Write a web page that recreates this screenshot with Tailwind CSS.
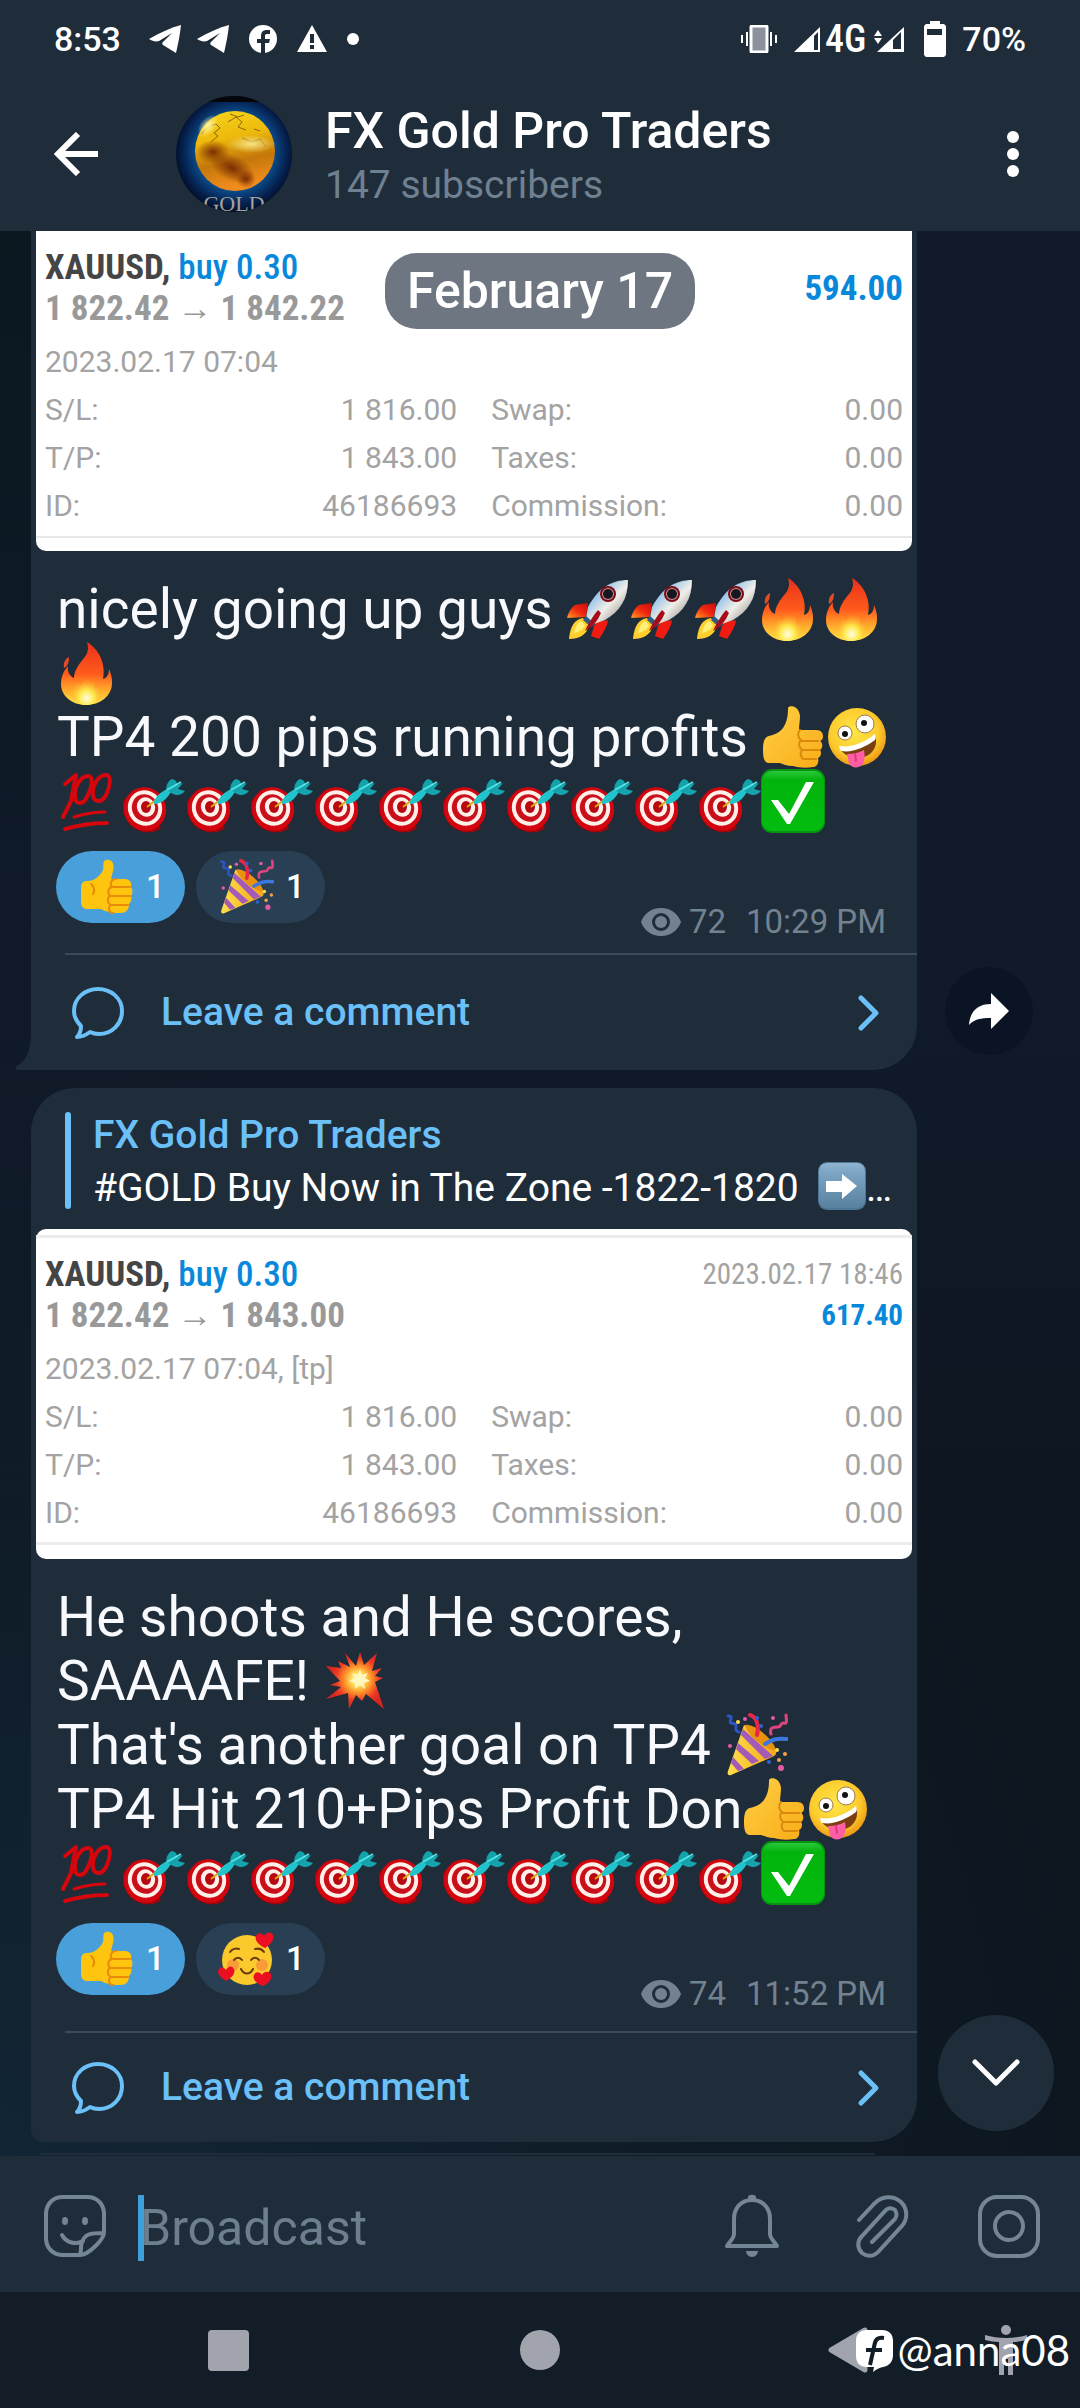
<!DOCTYPE html>
<html lang="en">
<head>
    <meta charset="UTF-8">
    <meta name="viewport" content="width=device-width, initial-scale=1.0">
    <title>FX Gold Pro Traders</title>
    <script src="https://cdn.jsdelivr.net/npm/@tailwindcss/browser@4"></script>
</head>
<body class="min-h-screen flex flex-col bg-[#0f1a26] text-white font-['Roboto',sans-serif]">

    <!-- Emoji and icon sprites -->
    <svg class="absolute size-0" aria-hidden="true">
        <defs>
            <linearGradient id="g-fire" x1="0" y1="0" x2="0" y2="1">
                <stop offset="0" stop-color="#e8301a"/><stop offset=".5" stop-color="#ff5a1c"/><stop offset=".8" stop-color="#ffb52e"/><stop offset="1" stop-color="#ffe14a"/>
            </linearGradient>
            <radialGradient id="g-fire-in" cx=".5" cy=".8" r=".6">
                <stop offset="0" stop-color="#fffde0"/><stop offset=".4" stop-color="#ffe94c"/><stop offset="1" stop-color="#ff9a22" stop-opacity="0"/>
            </radialGradient>
            <linearGradient id="g-rocket" x1="0" y1="0" x2="1" y2="1">
                <stop offset="0" stop-color="#3f8fd8"/><stop offset=".3" stop-color="#9cc6e6"/><stop offset=".55" stop-color="#f1efe9"/><stop offset="1" stop-color="#77716c"/>
            </linearGradient>
            <linearGradient id="g-fin" x1="0" y1="1" x2="1" y2="0">
                <stop offset="0" stop-color="#ffa020"/><stop offset=".5" stop-color="#f32710"/><stop offset="1" stop-color="#c80d0d"/>
            </linearGradient>
            <linearGradient id="g-thumb" x1="0" y1="0" x2="1" y2="1">
                <stop offset="0" stop-color="#ffd045"/><stop offset="1" stop-color="#f9ac18"/>
            </linearGradient>
            <radialGradient id="g-face" cx=".45" cy=".4" r=".6">
                <stop offset="0" stop-color="#ffe648"/><stop offset=".7" stop-color="#fccb2c"/><stop offset="1" stop-color="#ef9a14"/>
            </radialGradient>
            <linearGradient id="g-check" x1="0" y1="0" x2="0" y2="1">
                <stop offset="0" stop-color="#29c93c"/><stop offset=".15" stop-color="#02b30c"/><stop offset="1" stop-color="#03bd10"/>
            </linearGradient>
            <radialGradient id="g-boom" cx=".55" cy=".48" r=".5">
                <stop offset="0" stop-color="#ffffff"/><stop offset=".2" stop-color="#ffe96a"/><stop offset=".45" stop-color="#ff9a2b"/><stop offset=".75" stop-color="#ee3a24"/><stop offset="1" stop-color="#d9251d"/>
            </radialGradient>
            <linearGradient id="g-cone" x1="0" y1="0" x2="1" y2="0">
                <stop offset="0" stop-color="#ffdf4a"/><stop offset="1" stop-color="#f2a71b"/>
            </linearGradient>
            <linearGradient id="g-key" x1="0" y1="0" x2="0" y2="1">
                <stop offset="0" stop-color="#90b4d1"/><stop offset=".2" stop-color="#7da5c5"/><stop offset="1" stop-color="#58819f"/>
            </linearGradient>
        </defs>

        <symbol id="fire" viewBox="0 0 64 64">
            <path d="M30 1c2 7 1 11-3 16-5 6-10 13-10 20-4-2-7-6-6-12-4 4-7 11-7 18 0 12 11 21 25 21s26-9 26-22c0-6-1-9-3-14 0 5-2 9-6 10 3-14-3-29-16-37z" fill="url(#g-fire)"/>
            <path d="M12 16c-4 2-6 6-5 11 4-2 5-6 5-11z" fill="#e24a2a"/>
            <path d="M29 30c2 7-3 10-5 14-3-1-4-4-4-6-5 5-7 11-6 16 2 6 8 10 15 10s14-4 16-10c1-4 0-8-1-11-2 3-4 4-6 4 1-7-3-13-9-17z" fill="url(#g-fire-in)"/>
        </symbol>
        <symbol id="rocket" viewBox="0 0 64 64">
            <path d="M17 41c-8 1-13 8-14 21 10 0 18-4 20-14z" fill="#ffcf2f"/>
            <path d="M15 44c-5 3-6 8-7 12 5-1 9-3 11-8z" fill="#fff07a"/>
            <path d="M22 26 9 28C5 31 2 36 1 41l19-1z" fill="url(#g-fin)"/>
            <path d="M36 43c3 1 5 0 6 1-1 6-5 12-9 18-2-1-6-2-8-3l4-13z" fill="#ee1c12"/>
            <path d="M62 3C46 3 32 11 22 30l-2 11 8 6 11-4C54 34 62 22 62 3z" fill="url(#g-rocket)"/>
            <path d="m20 39 10 9-5 2-8-7z" fill="#2d5c83"/>
            <path d="M32 33c-5 6-9 12-13 21 8-4 13-11 16-18z" fill="#a50d18"/>
            <circle cx="42" cy="17" r="8" fill="#7d0a14"/><circle cx="42" cy="17" r="6" fill="#c6908f"/><circle cx="42" cy="17" r="5" fill="#15181f"/>
        </symbol>
        <symbol id="thumb" viewBox="0 0 64 64">
            <path d="M27 3c1-3 11-3 12 8 0 5-1 9-1 14h17c5 0 7 3 7 6s-1 4-3 5c3 1 3 8 0 9 2 2 1 7-2 8 1 3 0 9-5 9-6 1-13 1-20-1-6 0-10-2-13-3H8c-5 0-6-6-6-13S3 32 8 31c5-1 10-3 14-8 4-6 5-12 5-20z" fill="url(#g-thumb)"/>
            <path d="M40 36h17M41 45h17M42 54h13M39 25c-3 3-2 8 1 10-3 3-2 7 1 10-2 3-2 6 1 9" fill="none" stroke="#d98a0d" stroke-width="2" stroke-linecap="round"/>
        </symbol>
        <symbol id="zany" viewBox="0 0 64 64">
            <circle cx="32" cy="32" r="29" fill="url(#g-face)"/>
            <path d="M14 42c12 2 25-3 36-12 4 11-3 22-16 23-9 0-17-4-20-11z" fill="#7a3f0e"/>
            <path d="M14 41c12 2 25-3 36-12 1 2 1 4 0 6-11 8-23 13-34 11-1-1-2-3-2-5z" fill="#fff"/>
            <path d="M22 49c6 0 11-1 17-4 1 6 1 11-2 15-4 4-11 3-13-2-1-3-1-6-2-9z" fill="#ff5ea5"/>
            <path d="m30 49 1 7" stroke="#d93a82" stroke-width="2" stroke-linecap="round"/>
            <circle cx="20" cy="28" r="7" fill="#fff" stroke="#a07a4c" stroke-width="1"/><circle cx="20" cy="29" r="3" fill="#111"/>
            <circle cx="40" cy="19" r="9" fill="#fff" stroke="#a07a4c" stroke-width="1"/><circle cx="39" cy="18" r="3" fill="#111"/>
        </symbol>
        <symbol id="hundred" viewBox="0 0 64 64">
            <g fill="none" stroke="#d5060c" stroke-linecap="round" stroke-linejoin="round">
                <path d="m8 15 11-9-5 26-8 16" stroke-width="4"/>
                <path d="M31 7c-8 0-14 12-13 21 1 8 8 8 12 0 5-9 7-21 1-21z" stroke-width="4"/>
                <path d="M49 6c-8 0-14 11-13 20 1 8 9 8 13 0 4-8 6-20 0-20z" stroke-width="4"/>
                <path d="M17 48c10-3 20-5 31-5" stroke-width="3"/>
                <path d="M8 60c14-4 27-6 42-6" stroke-width="4"/>
            </g>
        </symbol>
        <symbol id="target" viewBox="0 0 64 64">
            <path d="M3 31c-4 12 3 27 16 31 10 3 18 0 21-3L12 21z" fill="#a3040a"/>
            <ellipse cx="24" cy="40" rx="21" ry="22" fill="#d3050f" transform="rotate(-25 24 40)"/>
            <ellipse cx="24" cy="39" rx="17" ry="18" fill="#fff0e8" transform="rotate(-25 24 39)"/>
            <ellipse cx="24" cy="39" rx="13" ry="14" fill="#c9101c" transform="rotate(-25 24 39)"/>
            <ellipse cx="25" cy="38" rx="9" ry="10" fill="#fff0e8" transform="rotate(-25 25 38)"/>
            <ellipse cx="25" cy="38" rx="5" ry="6" fill="#b80812"/>
            <path d="m26 38 9-7" stroke="#d9a920" stroke-width="2"/>
            <path d="M33 35c0-6 4-10 13-15l4 3c-5 8-10 12-17 12z" fill="#20c4cc"/>
            <path d="M45 20c1-5 2-8 6-10 4 1 5 3 5 6l6-2-5 6 7 2c-4 5-9 5-14 2z" fill="#14a3ac"/>
            <path d="m46 21 14-8" stroke="#57e2e4" stroke-width="2"/>
        </symbol>
        <symbol id="check" viewBox="0 0 64 64">
            <rect width="64" height="64" rx="11" fill="#089313"/>
            <rect x="1" y="2" width="62" height="60" rx="10" fill="url(#g-check)"/>
            <path d="M10 31h7l11 14 17-32h8L29 55h-3z" fill="#fff"/>
        </symbol>
        <symbol id="boom" viewBox="0 0 64 64">
            <path d="m22 4 11 13 4-14 4 13L54 4l-5 18 10-3-7 8 8 2-8 4 9 27-18-15-4 7-6-6-7 14-1-16-22 6 15-12-11-2 10-4L3 17l15 2-3-7 12 6z" fill="url(#g-boom)"/>
            <path d="m37 20 2 6 6-2-3 5 5 3-6 2 1 6-5-4-5 4v-6l-6-2 6-3-3-5 6 2z" fill="#fff6c0"/>
        </symbol>
        <symbol id="party" viewBox="0 0 64 64">
            <path d="M20 12c8 5 28 18 32 26 1 3-1 5-4 6L7 62c-3 1-4-1-3-4z" fill="url(#g-cone)"/>
            <path d="m17 22 24 24 8-3-30-27zM12 36l16 15 7-3-21-18zM7 50l7 8 6-2L9 44z" fill="#a45bb8"/>
            <path d="M21 12c9-2 30 15 31 26-9-1-29-15-31-26z" fill="#e8920f"/>
            <g fill="none" stroke-width="4" stroke-linecap="round">
                <path d="M26 2c7 2 9 11 7 20" stroke="#e8264a"/>
                <path d="M41 31c8-5 13-6 22-5" stroke="#3a78e0"/>
                <path d="M4 3c7 0 0 6 3 7s6 0 5 4 1 4 3 5" stroke="#2a56c6" stroke-width="3"/>
                <path d="M47 21c-2-7 3-7 7-7s2-5 6-4 2-4 2-8" stroke="#e0447e" stroke-width="3"/>
            </g>
            <g fill="#f2a34a"><circle cx="61" cy="41" r="2"/><circle cx="55" cy="47" r="2"/></g>
            <g fill="#ffe04a"><circle cx="14" cy="9" r="2"/><circle cx="53" cy="37" r="2"/></g>
            <g fill="#e45aa4"><circle cx="57" cy="55" r="3"/><circle cx="49" cy="5" r="2"/><circle cx="6" cy="33" r="2"/><circle cx="21" cy="6" r="2"/></g>
            <g fill="#3161d6"><circle cx="33" cy="5" r="2"/><circle cx="37" cy="13" r="2"/><circle cx="45" cy="49" r="2"/></g>
        </symbol>
        <symbol id="hearts" viewBox="0 0 56 56">
            <circle cx="29" cy="29" r="25" fill="#fcc92c"/>
            <circle cx="15" cy="34" r="6" fill="#f7903c" opacity=".8"/><circle cx="44" cy="34" r="6" fill="#f7903c" opacity=".8"/>
            <g fill="none" stroke="#6b3a0c" stroke-width="2" stroke-linecap="round">
                <path d="M12 21c2-3 6-4 9-3M37 18c4-1 7 0 9 3M16 29c2-3 6-3 8 0M33 29c2-3 6-3 8 0M23 38c3 6 9 6 12 0"/>
            </g>
            <path d="M47 17c-6-3-11-8-9-12 2-4 6-3 8 0 2-4 7-5 9-1 2 5-3 10-8 13zM8 50C3 47-2 42 1 38c2-3 5-2 7 1 2-4 6-5 8-1 2 5-3 9-8 12zM45 55c-6-2-11-7-9-11 2-4 6-3 8 0 2-4 7-4 9-1 2 5-3 10-8 12z" fill="#ec0f22"/>
        </symbol>
        <symbol id="arrow-key" viewBox="0 0 48 48">
            <rect width="48" height="48" rx="9" fill="#4d7796"/>
            <rect x="1" y="1" width="46" height="45" rx="8" fill="url(#g-key)"/>
            <path d="M8 19h16v-7l15 12-15 13v-7H8z" fill="#fff"/>
        </symbol>
        <symbol id="react-thumb" viewBox="0 0 56 56">
            <path d="M28 1c6-1 9 4 7 11l-2 8h14c5 0 7 4 6 8 2 3 2 6 0 9 1 3 0 6-2 8 0 6-3 9-9 9-8 0-14-1-19-4H9c-4 0-6-3-6-8V29c0-5 2-7 6-7 8 0 13-5 16-11 1-4-1-9 3-10z" fill="#ffc40d"/>
            <path d="M35 54c-5 0-5-6-2-8-4-2-4-7-1-9-3-3-2-8 2-9-3-4 0-8 4-8M34 28h18M32 37h20M33 46h17M13 25c3 3 4 7 2 10" fill="none" stroke="#e98b0a" stroke-width="2" stroke-linecap="round"/>
        </symbol>

        <symbol id="eye" viewBox="0 0 40 28">
            <path fill-rule="evenodd" d="M20 0C10 0 3 6 0 14c3 8 10 14 20 14s17-6 20-14C37 6 30 0 20 0zm0 23a9 9 0 1 1 0-18 9 9 0 0 1 0 18z" fill="currentColor"/>
            <circle cx="20" cy="14" r="6" fill="currentColor"/>
        </symbol>
        <symbol id="comment" viewBox="0 0 54 54">
            <path d="M27 3c13 0 24 9 24 22S41 48 28 48c-4 0-7-1-9-2-4 3-8 5-13 5 3-3 4-7 4-11-4-4-7-9-7-15C3 12 14 3 27 3z" fill="none" stroke="currentColor" stroke-width="4" stroke-linejoin="round"/>
        </symbol>
        <symbol id="chevron" viewBox="0 0 24 38">
            <path d="m4 4 15 15L4 34" fill="none" stroke="currentColor" stroke-width="5" stroke-linecap="round" stroke-linejoin="round"/>
        </symbol>
        <symbol id="plane" viewBox="0 0 32 28">
            <path d="M0 14C10 8 21 3 32 0c-1 10-3 19-5 28l-13-8c-1-1-1-2 0-3l9-9-13 8c-3 1-7 0-10-2z" fill="#fff"/>
        </symbol>
    </svg>

    <header class="bg-[#1f2c3a]">
        <!-- Status bar -->
        <div class="flex items-center h-[76px] pt-[2px] pl-[54px] pr-[54px] text-[34px] leading-[40px] font-medium">
            <span>8:53</span>
            <svg class="w-8 h-7 ml-7"><use href="#plane"/></svg>
            <svg class="w-8 h-7 ml-4"><use href="#plane"/></svg>
            <svg class="size-7 ml-5" viewBox="0 0 28 28">
                <circle cx="14" cy="14" r="14" fill="#fff"/>
                <path d="M12 28V18H8v-4h4v-3c0-4 2-6 6-6h3v4h-3c-2 0-2 1-2 2v3h5l-1 4h-4v10z" fill="#1f2c3a"/>
            </svg>
            <svg class="w-[30px] h-7 ml-5" viewBox="0 0 30 28">
                <path d="M15 0 30 27H0z" fill="#fff"/><path d="M13 9h4v9h-4zM13 20h4v4h-4z" fill="#1f2c3a"/>
            </svg>
            <span class="size-3 ml-5 rounded-full bg-white"></span>

            <svg class="w-9 h-7 ml-auto" viewBox="0 0 36 28">
                <rect x="10" y="1" width="16" height="26" rx="1" fill="#8b929e" stroke="#fff" stroke-width="3"/>
                <path d="M6 7v14M30 7v14M1 10v8M35 10v8" stroke="#fff" stroke-width="2"/>
            </svg>
            <svg class="w-7 h-7 ml-4" viewBox="0 0 28 28">
                <path d="M1 27 27 2v25z" fill="#fff"/><path d="M21 11l4-4v18h-4z" fill="#1f2c3a"/>
            </svg>
            <span class="ml-1 text-[38px] font-['Roboto_Condensed',sans-serif]">4G</span>
            <svg class="w-[30px] h-7 ml-2" viewBox="0 0 30 28">
                <path d="m0 11 4-6 4 6zM0 13h8l-4 6zM3 27 30 2v25z" fill="#fff"/><path d="m19 15 8-8v17h-8z" fill="#1f2c3a"/>
            </svg>
            <svg class="w-[22px] h-9 ml-5" viewBox="0 0 22 36">
                <path d="M6 0h10v3h4l2 2v29l-2 2H2l-2-2V5l2-2h4z" fill="#fff"/><path d="M3 8h15v6H3z" fill="#1f2c3a"/>
            </svg>
            <span class="ml-4">70%</span>
        </div>

        <!-- Channel bar -->
        <div class="flex items-center h-[155px] pl-[54px] pr-[53px]">
            <button aria-label="Back" class="shrink-0">
                <svg class="size-11" viewBox="0 0 44 44"><path d="M24 2 4 22l20 20M4 22h40" fill="none" stroke="#fff" stroke-width="6"/></svg>
            </button>
            <svg class="size-[116px] ml-[78px] shrink-0" viewBox="0 0 116 116" role="img" aria-label="Channel photo">
                <defs>
                    <clipPath id="av"><circle cx="58" cy="58" r="58"/></clipPath>
                    <radialGradient id="av-bg" cx="59" cy="56" r="62" gradientUnits="userSpaceOnUse"><stop offset=".55" stop-color="#0d5aa0"/><stop offset=".85" stop-color="#05204d"/><stop offset="1" stop-color="#020b22"/></radialGradient>
                    <linearGradient id="av-ball" x1="0" y1="0" x2=".2" y2="1"><stop offset="0" stop-color="#f7d61a"/><stop offset=".4" stop-color="#edb90c"/><stop offset=".7" stop-color="#c4770a"/><stop offset="1" stop-color="#f08c1c"/></linearGradient>
                    <radialGradient id="av-glow" cx=".5" cy=".5" r=".5"><stop offset="0" stop-color="#fff6a0"/><stop offset="1" stop-color="#fff6a0" stop-opacity="0"/></radialGradient>
                    <radialGradient id="av-shade" cx=".5" cy=".5" r=".5"><stop offset="0" stop-color="#7c2f02"/><stop offset="1" stop-color="#7c2f02" stop-opacity="0"/></radialGradient>
                </defs>
                <g clip-path="url(#av)">
                    <rect width="116" height="116" fill="url(#av-bg)"/>
                    <rect width="116" height="6" fill="#04060c"/>
                    <circle cx="59" cy="55" r="40" fill="url(#av-ball)"/>
                    <ellipse cx="37" cy="56" rx="17" ry="12" fill="url(#av-shade)"/>
                    <ellipse cx="56" cy="72" rx="24" ry="13" fill="url(#av-shade)" transform="rotate(25 56 72)"/>
                    <ellipse cx="70" cy="83" rx="10" ry="9" fill="url(#av-shade)"/>
                    <path d="M26 38c3-6 8-8 14-10l4 4-6 5 4 3-7 6M52 26l8-5 6 5-4 5 8 3M66 42l10 4 8-3 6 8M78 33l6 2M54 18l8 3 6-2" fill="none" stroke="#8c6410" stroke-width="1"/>
                    <ellipse cx="32" cy="30" rx="8" ry="13" fill="url(#av-glow)" transform="rotate(40 32 30)"/>
                    <ellipse cx="75" cy="48" rx="24" ry="9" fill="url(#av-glow)" opacity=".8"/>
                    <text x="58" y="115" text-anchor="middle" font-family="Liberation Serif, serif" font-size="22" fill="#a9a297">GOLD</text>
                </g>
            </svg>
            <div class="ml-[33px] mt-[2px] grow min-w-0">
                <h1 class="text-[50px] leading-[60px] font-medium truncate">FX Gold Pro Traders</h1>
                <p class="text-[39px] leading-[48px] text-[#6f8191]">147 subscribers</p>
            </div>
            <button aria-label="More" class="px-2 shrink-0">
                <svg class="w-3 h-[46px]" viewBox="0 0 12 46"><g fill="#fff"><circle cx="6" cy="6" r="6"/><circle cx="6" cy="23" r="6"/><circle cx="6" cy="40" r="6"/></g></svg>
            </button>
        </div>
    </header>

    <main class="relative grow bg-[radial-gradient(circle_at_0%_100%,#122534,transparent_50%),radial-gradient(circle_at_0%_0%,#0b1820,transparent_40%),linear-gradient(to_bottom,#111a2b_35%,#0d161f_70%)]">
        <div class="absolute top-[22px] inset-x-0 flex justify-center z-10">
            <time class="rounded-[32px] bg-[#6d7681] px-[22px] text-[50px] leading-[76px] font-medium">February 17</time>
        </div>

        <!-- Message 1 -->
        <div class="relative flex items-end pl-[31px]">
            <svg class="absolute left-4 bottom-0 w-4 h-10" viewBox="0 0 16 40"><path d="M16 0v40H0v-4c10-4 15-14 15-36z" fill="#1f2d3a"/></svg>
            <article class="grow min-w-0 bg-[#1f2d3a] rounded-br-[44px]">
                <div class="mx-[5px] px-[9px] pt-4 pb-[13px] rounded-b-[10px] bg-white text-[#a3a3a3]">
                    <div class="flex justify-between items-center leading-[41px] font-['Roboto_Condensed',Roboto,sans-serif] text-[35px]">
                        <div>
                            <div><b class="text-[#454545]">XAUUSD,</b> <span class="font-medium text-[#0788da]">buy 0.30</span></div>
                            <div class="font-bold text-[#999999]">1 822.42 → 1 842.22</div>
                        </div>
                        <b class="text-[#0788da]">594.00</b>
                    </div>
                    <p class="mt-[9px] text-[30px] leading-[48px]">2023.02.17 07:04</p>
                    <table class="w-full text-[30px] leading-[48px]">
                        <tr><th class="w-[16%] text-left font-normal">S/L:</th><td class="w-[36%] text-right pr-[34px]">1 816.00</td><th class="w-[28%] text-left font-normal">Swap:</th><td class="text-right">0.00</td></tr>
                        <tr><th class="text-left font-normal">T/P:</th><td class="text-right pr-[34px]">1 843.00</td><th class="text-left font-normal">Taxes:</th><td class="text-right">0.00</td></tr>
                        <tr><th class="text-left font-normal">ID:</th><td class="text-right pr-[34px]">46186693</td><th class="text-left font-normal">Commission:</th><td class="text-right">0.00</td></tr>
                    </table>
                    <div class="mx-[-9px] mt-[6px] h-[2px] bg-[#e8e8e8]"></div>
                </div>
                <p class="pt-[26px] pl-[26px] text-[55px] leading-[64px] text-[#f7f9fc] whitespace-nowrap">nicely going up guys <svg class="inline-block size-16 align-top"><use href="#rocket"/></svg><svg class="inline-block size-16 align-top"><use href="#rocket"/></svg><svg class="inline-block size-16 align-top"><use href="#rocket"/></svg><svg class="inline-block size-16 align-top"><use href="#fire"/></svg><svg class="inline-block size-16 align-top"><use href="#fire"/></svg><br><svg class="inline-block size-16 align-top"><use href="#fire"/></svg><br>TP4 200 pips running profits <svg class="inline-block size-16 align-top"><use href="#thumb"/></svg><svg class="inline-block size-16 align-top"><use href="#zany"/></svg><br><svg class="inline-block size-16 align-top"><use href="#hundred"/></svg><svg class="inline-block size-16 align-top"><use href="#target"/></svg><svg class="inline-block size-16 align-top"><use href="#target"/></svg><svg class="inline-block size-16 align-top"><use href="#target"/></svg><svg class="inline-block size-16 align-top"><use href="#target"/></svg><svg class="inline-block size-16 align-top"><use href="#target"/></svg><svg class="inline-block size-16 align-top"><use href="#target"/></svg><svg class="inline-block size-16 align-top"><use href="#target"/></svg><svg class="inline-block size-16 align-top"><use href="#target"/></svg><svg class="inline-block size-16 align-top"><use href="#target"/></svg><svg class="inline-block size-16 align-top"><use href="#target"/></svg><svg class="inline-block size-16 align-top"><use href="#check"/></svg></p>
                <div class="flex items-start mt-[18px] pl-[25px] pr-[31px] pb-[11px]">
                    <button class="flex items-center h-[72px] w-[129px] pl-[22px] gap-3 rounded-full bg-[#499fd9] text-[33px] font-medium"><svg class="size-14"><use href="#react-thumb"/></svg>1</button>
                    <button class="flex items-center h-[72px] w-[129px] pl-[22px] ml-[11px] gap-3 rounded-full bg-[#283f54] text-[33px] font-medium"><svg class="size-14"><use href="#party"/></svg>1</button>
                    <div class="flex items-center mt-[51px] ml-auto text-[33px] leading-[40px] text-[#72828f]">
                        <svg class="w-10 h-7 mr-2"><use href="#eye"/></svg>72<span class="ml-5">10:29 PM</span>
                    </div>
                </div>
                <a href="#" class="flex items-center h-[117px] ml-[34px] pl-[6px] pr-9 border-t-2 border-[#3b4b57] text-[39px] font-medium text-[#6bc0f8]">
                    <svg class="size-[54px] mr-9"><use href="#comment"/></svg>Leave a comment<svg class="w-6 h-[38px] ml-auto"><use href="#chevron"/></svg>
                </a>
            </article>
            <div class="shrink-0 w-[163px] pl-7 pb-[15px]">
                <button aria-label="Share" class="flex items-center justify-center size-[88px] rounded-full bg-[#0a1424]">
                    <svg class="w-10 h-9" viewBox="0 0 40 36"><path d="M0 32C1 18 9 11 22 11V0l18 18-18 18V25C12 25 5 26 0 32z" fill="#fff"/></svg>
                </button>
            </div>
        </div>

        <!-- Message 2 -->
        <div class="relative flex items-end pl-[31px] mt-[18px]">
            <article class="grow min-w-0 bg-[#1f2d3a] rounded-t-[44px] rounded-br-[44px] rounded-bl-xl">
                <a href="#" class="flex pt-6 pb-5 ml-[34px] mr-[18px]">
                    <span class="w-[6px] rounded-full bg-[#6bc0f8]"></span>
                    <span class="block ml-[22px] text-[39px] whitespace-nowrap">
                        <span class="block h-[46px] leading-[46px] font-medium text-[#6bc0f8]">FX Gold Pro Traders</span>
                        <span class="block mt-1 h-[47px] leading-[52px]">#GOLD Buy Now in The Zone -1822-1820 &nbsp;<svg class="inline-block size-12 align-top"><use href="#arrow-key"/></svg>…</span>
                    </span>
                </a>
                <div class="mx-[5px] px-[9px] pt-[6px] pb-[14px] rounded-[10px] bg-white text-[#a3a3a3]">
                    <div class="mx-[-9px] mb-4 h-[3px] bg-[#ececec]"></div>
                    <div class="flex justify-between items-center leading-[41px] font-['Roboto_Condensed',Roboto,sans-serif] text-[35px]">
                        <div>
                            <div><b class="text-[#454545]">XAUUSD,</b> <span class="font-medium text-[#0788da]">buy 0.30</span></div>
                            <div class="font-bold text-[#999999]">1 822.42 → 1 843.00</div>
                        </div>
                        <div class="text-right text-[29px]">
                            <div>2023.02.17 18:46</div>
                            <b class="block text-[#0788da]">617.40</b>
                        </div>
                    </div>
                    <p class="mt-[9px] text-[30px] leading-[48px]">2023.02.17 07:04, [tp]</p>
                    <table class="w-full text-[30px] leading-[48px]">
                        <tr><th class="w-[16%] text-left font-normal">S/L:</th><td class="w-[36%] text-right pr-[34px]">1 816.00</td><th class="w-[28%] text-left font-normal">Swap:</th><td class="text-right">0.00</td></tr>
                        <tr><th class="text-left font-normal">T/P:</th><td class="text-right pr-[34px]">1 843.00</td><th class="text-left font-normal">Taxes:</th><td class="text-right">0.00</td></tr>
                        <tr><th class="text-left font-normal">ID:</th><td class="text-right pr-[34px]">46186693</td><th class="text-left font-normal">Commission:</th><td class="text-right">0.00</td></tr>
                    </table>
                    <div class="mx-[-9px] mt-[5px] h-[3px] bg-[#ececec]"></div>
                </div>
                <p class="pt-[26px] pl-[26px] text-[55px] leading-[64px] text-[#f7f9fc] whitespace-nowrap">He shoots and He scores,<br>SAAAAFE! <svg class="inline-block size-16 align-top"><use href="#boom"/></svg><br>That's another goal on TP4 <svg class="inline-block size-16 align-top"><use href="#party"/></svg><br>TP4 Hit 210+Pips Profit Don<svg class="inline-block size-16 align-top"><use href="#thumb"/></svg><svg class="inline-block size-16 align-top"><use href="#zany"/></svg><br><svg class="inline-block size-16 align-top"><use href="#hundred"/></svg><svg class="inline-block size-16 align-top"><use href="#target"/></svg><svg class="inline-block size-16 align-top"><use href="#target"/></svg><svg class="inline-block size-16 align-top"><use href="#target"/></svg><svg class="inline-block size-16 align-top"><use href="#target"/></svg><svg class="inline-block size-16 align-top"><use href="#target"/></svg><svg class="inline-block size-16 align-top"><use href="#target"/></svg><svg class="inline-block size-16 align-top"><use href="#target"/></svg><svg class="inline-block size-16 align-top"><use href="#target"/></svg><svg class="inline-block size-16 align-top"><use href="#target"/></svg><svg class="inline-block size-16 align-top"><use href="#target"/></svg><svg class="inline-block size-16 align-top"><use href="#check"/></svg></p>
                <div class="flex items-start mt-[18px] pl-[25px] pr-[31px] pb-[17px]">
                    <button class="flex items-center h-[72px] w-[129px] pl-[22px] gap-3 rounded-full bg-[#499fd9] text-[33px] font-medium"><svg class="size-14"><use href="#react-thumb"/></svg>1</button>
                    <button class="flex items-center h-[72px] w-[129px] pl-[22px] ml-[11px] gap-3 rounded-full bg-[#283f54] text-[33px] font-medium"><svg class="size-14"><use href="#hearts"/></svg>1</button>
                    <div class="flex items-center mt-[51px] ml-auto text-[33px] leading-[40px] text-[#72828f]">
                        <svg class="w-10 h-7 mr-2"><use href="#eye"/></svg>74<span class="ml-5">11:52 PM</span>
                    </div>
                </div>
                <a href="#" class="flex items-center h-[111px] ml-[34px] pl-[6px] pr-9 border-t-2 border-[#3b4b57] text-[39px] font-medium text-[#6bc0f8]">
                    <svg class="size-[54px] mr-9"><use href="#comment"/></svg>Leave a comment<svg class="w-6 h-[38px] ml-auto"><use href="#chevron"/></svg>
                </a>
            </article>
            <div class="shrink-0 w-[163px] pl-[21px] pb-[11px]">
                <button aria-label="Scroll to bottom" class="flex items-center justify-center size-[116px] rounded-full bg-[#1f2d3b]">
                    <svg class="w-12 h-7" viewBox="0 0 48 28"><path d="m3 3 21 21L45 3" fill="none" stroke="#fff" stroke-width="5" stroke-linecap="round" stroke-linejoin="round"/></svg>
                </button>
            </div>
        </div>

        <!-- Top edge of the next message -->
        <div class="mt-[11px] ml-10 mr-[205px] h-[2px] bg-[#1f2d3a]"></div>
    </main>

    <form class="flex items-center h-[136px] pt-1 pl-[43px] pr-[39px] bg-[#1f2c3a] text-[#748696]">
        <button type="button" aria-label="Stickers" class="shrink-0">
            <svg class="size-16" viewBox="0 0 64 64" fill="none" stroke="currentColor" stroke-width="4" stroke-linecap="round" stroke-linejoin="round">
                <path d="M20 3h24c10 0 17 7 17 17v18c0 8-16 23-24 23H20C10 61 3 54 3 44V20C3 10 10 3 20 3zM37 60c2-4 0-8 2-12 3-8 8-9 21-9M19 41c4 8 14 10 21 6"/>
                <ellipse cx="22" cy="27" rx="3" ry="4" fill="currentColor" stroke="none"/><ellipse cx="42" cy="27" rx="3" ry="4" fill="currentColor" stroke="none"/>
            </svg>
        </button>
        <span class="w-[6px] h-[66px] mt-1 ml-[31px] mr-[-4px] shrink-0 z-10 bg-[#3f9fdb]"></span>
        <input type="text" aria-label="Broadcast" placeholder="Broadcast" class="grow min-w-0 h-20 mt-1 bg-transparent text-[50px] text-white placeholder-[#6d7f8f] outline-none">
        <button type="button" aria-label="Notifications" class="shrink-0">
            <svg class="size-16" viewBox="0 0 64 64" fill="none" stroke="currentColor" stroke-width="4" stroke-linejoin="round">
                <path d="M32 6c-11 0-18 8-18 19v15c0 4-3 6-7 12h50c-4-6-7-8-7-12V25c0-11-7-19-18-19z"/>
                <path d="M28 6V3c0-3 8-3 8 0v3zM26 57h12c0 3-3 6-6 6s-6-3-6-6z" fill="currentColor" stroke="none"/>
            </svg>
        </button>
        <button type="button" aria-label="Attach" class="ml-[67px] shrink-0">
            <svg class="size-16" viewBox="0 0 64 64" fill="none" stroke="currentColor" stroke-width="4" stroke-linecap="round">
                <path d="M8 26 24 9c7-7 18-8 26-1 7 7 7 18 0 25L28 57c-5 6-12 6-17 2-5-5-5-12 0-17l24-26c3-3 6-2 9 0 2 3 2 6 0 9L21 48"/>
            </svg>
        </button>
        <button type="button" aria-label="Camera" class="ml-[62px] shrink-0">
            <svg class="size-16" viewBox="0 0 64 64" fill="none" stroke="currentColor" stroke-width="4">
                <rect x="3" y="3" width="58" height="59" rx="17"/><circle cx="32" cy="32" r="14"/>
            </svg>
        </button>
    </form>

    <nav class="relative flex items-center h-[116px] bg-[#121d27] text-[#a1a3ad]">
        <button aria-label="Recent apps" class="ml-[208px] size-[41px] rounded-sm bg-[#a1a3ad]"></button>
        <button aria-label="Home" class="ml-[271px] size-10 rounded-full bg-[#a1a3ad]"></button>
        <button aria-label="Back" class="ml-[268px]">
            <svg class="w-10 h-[46px]" viewBox="0 0 40 46"><path d="M3 23 37 3v40z" fill="currentColor" stroke="currentColor" stroke-width="5" stroke-linejoin="round"/></svg>
        </button>
        <button aria-label="Accessibility" class="ml-auto mr-[53px]">
            <svg class="w-[42px] h-[50px]" viewBox="0 0 42 50" fill="currentColor"><circle cx="21" cy="5" r="5"/><path d="M0 10c13 4 29 4 42 0v5c-5 1-9 2-14 2v33h-5V34h-4v16h-5V17c-5 0-9-1-14-2z"/></svg>
        </button>
        <div class="absolute right-[10px] inset-y-0 flex items-center gap-[5px] text-white font-['Lato',sans-serif]">
            <svg class="w-[37px] h-[43px]" viewBox="0 0 37 43">
                <path d="M11 1h15c7 0 11 4 11 11v14c0 7-4 11-10 12-4 1-6 2-10 5l1-5h-7C4 38 0 34 0 27V12C0 5 4 1 11 1z" fill="#fff"/>
                <path d="M28 9c-8-1-9 3-10 9l-4 18M10 21h16" fill="none" stroke="#121d27" stroke-width="4"/>
            </svg>
            <span class="text-[42px] leading-[50px]">@anna08</span>
        </div>
    </nav>
</body>
</html>
